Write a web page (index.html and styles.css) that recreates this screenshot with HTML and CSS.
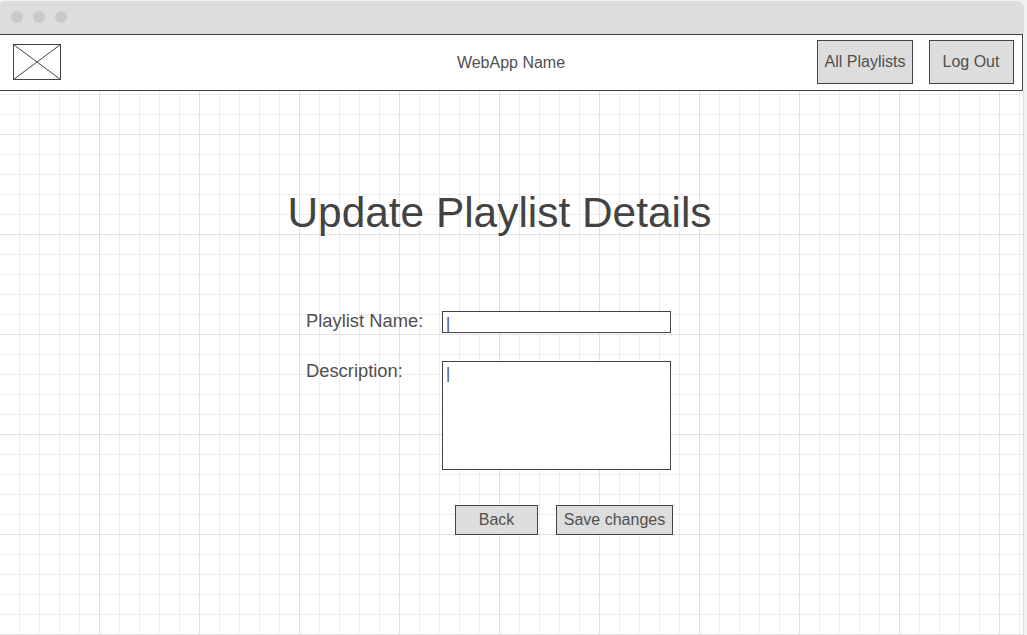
FILE: index.html
```html
<!DOCTYPE html>
<html lang="en">
<head>
<meta charset="utf-8">
<title>Update Playlist Details</title>
<link rel="stylesheet" href="styles.css">
</head>
<body>
<div class="window">
  <div class="titlebar"><span class="dot"></span><span class="dot"></span><span class="dot"></span></div>
  <header class="header">
    <svg class="logo" width="48" height="36" viewBox="0 0 48 36" fill="none" stroke="#434343">
      <rect x=".5" y=".5" width="47" height="35"/>
      <path d="M.5 .5 47.5 35.5M47.5 .5 .5 35.5"/>
    </svg>
    <div class="app-name">WebApp Name</div>
    <nav class="nav">
      <button class="btn btn-playlists">All Playlists</button>
      <button class="btn btn-logout">Log Out</button>
    </nav>
  </header>
  <main class="canvas">
    <h1 class="title">Update Playlist Details</h1>
    <form class="form">
      <label class="label">Playlist Name:</label>
      <div class="field">|</div>
      <label class="label">Description:</label>
      <div class="field field-area">|</div>
    </form>
    <div class="actions">
      <button type="button" class="btn btn-back">Back</button>
      <button type="button" class="btn btn-save">Save changes</button>
    </div>
  </main>
</div>
</body>
</html>
```
FILE: styles.css
```css
* { box-sizing: border-box; }

body {
  margin: 0;
  height: 635px;
  overflow: hidden;
  padding-top: 1px;
  background: #f2f2f2;
  color: #505050;
  font: 16px/20px "Liberation Sans", Arial, sans-serif;
}

.window {
  width: 1024px;
  opacity: .999;
}

.titlebar {
  display: flex;
  align-items: center;
  gap: 10px;
  height: 33px;
  padding: 0 0 1px 11px;
  background: #ddd;
  border-radius: 4px 6px 0 0;
}

.dot {
  width: 12px;
  height: 12px;
  border-radius: 50%;
  background: #cacaca;
}

.header {
  display: flex;
  justify-content: space-between;
  width: 1023px;
  height: 57px;
  padding: 5px 8px 0 13px;
  background: #fff;
  border: 1px solid #434343;
  border-left: 0;
}

.logo { margin-top: 4px; }

.app-name {
  width: 120px;
  margin: 13px 0 0 144px;
  text-align: center;
}

.nav { display: flex; gap: 16px; }

.btn {
  height: 30px;
  padding: 0;
  border: 1px solid #434343;
  border-radius: 0;
  background: #ddd;
  color: #505050;
  font: inherit;
  white-space: nowrap;
}

.btn-playlists { width: 96px; height: 44px; }
.btn-logout { width: 85px; height: 44px; padding-right: 1px; }
.btn-back { width: 83px; }
.btn-save { width: 117px; }

/* Graph paper: 20px minor lines, 100px major lines */
.canvas {
  height: 544px;
  padding-top: 98px;
  border-right: 1px solid #ddd;
  background-color: #fff;
  background-image:
    linear-gradient(to right, #e0e0e0 1px, transparent 1px),
    linear-gradient(to bottom, #e0e0e0 1px, transparent 1px),
    linear-gradient(to right, #ededed 1px, transparent 1px),
    linear-gradient(to bottom, #ededed 1px, transparent 1px);
  background-size: 100px 100px, 100px 100px, 20px 20px, 20px 20px;
  background-position: 99px 43px, 99px 43px, 19px 3px, 19px 3px;
}

.title {
  width: 999px;
  margin: 0;
  color: #434343;
  text-align: center;
  font-size: 42.4px;
  font-weight: 400;
  line-height: 48px;
}

.form {
  display: grid;
  grid-template-columns: 136px 229px;
  row-gap: 28px;
  margin: 74px 0 0 306px;
}

.label {
  height: 22px;
  font-size: 18.35px;
  line-height: 19px;
}

.field {
  height: 22px;
  padding: 2px 0 0 3px;
  border: 1px solid #434343;
  background: #fff;
}

.field-area { height: 109px; }

.actions {
  display: flex;
  gap: 18px;
  margin: 35px 0 0 455px;
}
```
